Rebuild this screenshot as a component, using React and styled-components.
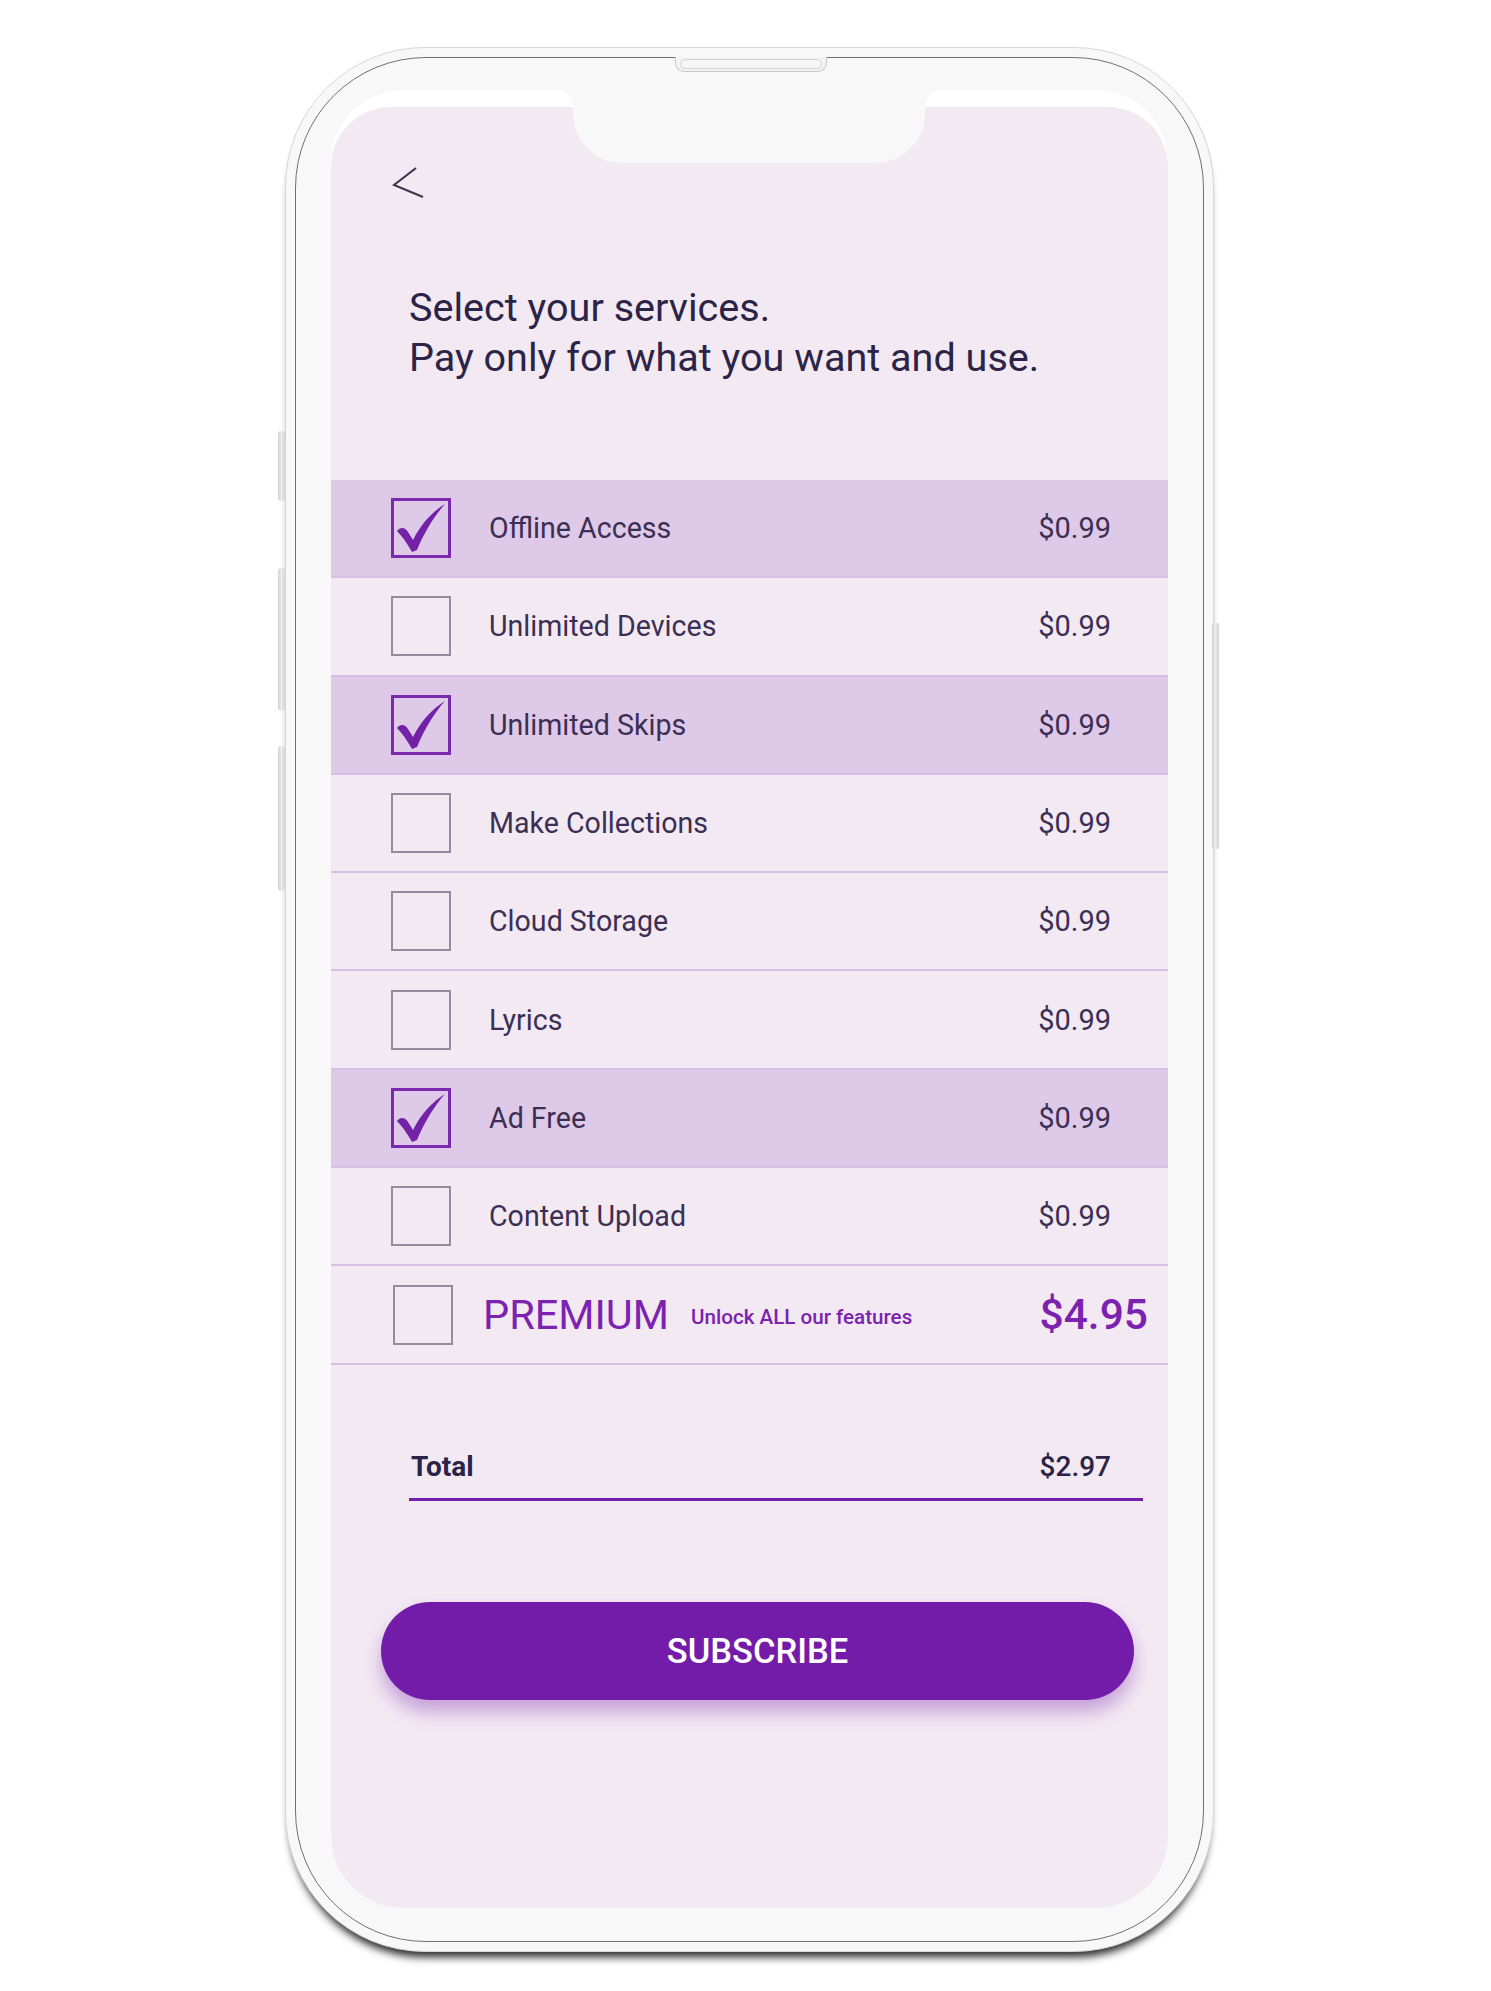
import React from 'react'
import styled, { createGlobalStyle } from 'styled-components'

const GlobalStyle = createGlobalStyle`
  body {
    margin: 0;
    background: #ffffff;
    font-family: Roboto, "Noto Sans", sans-serif;
  }
`

const Page = styled.div`
  display: flex;
  justify-content: center;
  padding: 47px 0 0 8px;
  height: 1991px;
  box-sizing: border-box;
`

const PhoneBody = styled.div`
  position: relative;
  width: 929px;
  height: 1905px;
  box-sizing: border-box;
  padding: 9px;
  border-radius: 140px;
  background: #f8f8f8;
  border: 1px solid #d6d6d6;
  box-shadow: 0 10px 8px -5px rgba(0, 0, 0, 0.85);
`

const SideButton = styled.div`
  position: absolute;
  top: ${p => p.top}px;
  height: ${p => p.h}px;
  width: 7px;
  ${p => (p.right ? 'right: -6px;' : 'left: -8px;')}
  border-radius: 3px;
  background: linear-gradient(90deg, #d2d2d2, #ececec, #d2d2d2);
`

const Speaker = styled.div`
  position: absolute;
  top: 9px;
  left: 389px;
  width: 152px;
  height: 15px;
  box-sizing: border-box;
  border: 1px solid #c9c9c9;
  border-top: none;
  border-radius: 0 0 9px 9px;
  background: #f3f3f3;
  padding: 2px 4px;

  &::after {
    content: '';
    display: block;
    height: 8px;
    border: 1px solid #d4d4d4;
    border-radius: 5px;
    background: #f6f6f6;
  }
`

const Rim = styled.div`
  height: 100%;
  box-sizing: border-box;
  border: 1px solid #707070;
  border-radius: 131px;
  padding: 32px 35px 33px 35px;
`

const Screen = styled.div`
  position: relative;
  height: 100%;
  box-sizing: border-box;
  border-radius: 72px;
  background: #ffffff;
  overflow: hidden;
  display: flex;
  flex-direction: column;
  padding-top: 17px;
`

const Notch = styled.div`
  position: absolute;
  top: 0;
  left: 242px;
  width: 352px;
  height: 73px;
  background: #f8f8f8;
  border-radius: 0 0 50px 50px;

  &::before,
  &::after {
    content: '';
    position: absolute;
    top: 0;
    width: 16px;
    height: 16px;
  }
  &::before {
    left: -16px;
    background: radial-gradient(circle at 0 100%, transparent 15.5px, #f8f8f8 16px);
  }
  &::after {
    right: -16px;
    background: radial-gradient(circle at 100% 100%, transparent 15.5px, #f8f8f8 16px);
  }
`

const Content = styled.div`
  flex: 1;
  background: #f3e9f3;
  border-radius: 60px 60px 0 0;
  display: flex;
  flex-direction: column;
`

const Header = styled.div`
  padding: 59px 0 0 61px;
  height: 34px;
`

const BackButton = styled.button`
  border: none;
  background: none;
  padding: 0;
  width: 34px;
  height: 34px;
  cursor: pointer;
`

const Title = styled.h1`
  margin: 83px 0 0 78px;
  font-size: 39.6px;
  line-height: 50px;
  font-weight: 400;
  color: #2b2446;
`

const List = styled.div`
  margin-top: 97px;
  display: flex;
  flex-direction: column;
`

const Row = styled.div`
  display: flex;
  align-items: center;
  height: 98.3px;
  box-sizing: border-box;
  padding: 0 57px 0 ${p => p.indent || 60}px;
  border-bottom: 2px solid #d7bee6;
  background: ${p => (p.selected ? '#dfc9e8' : 'transparent')};
`

const Box = styled.div`
  width: 60px;
  height: 60px;
  box-sizing: border-box;
  flex-shrink: 0;
  border: ${p => (p.checked ? '3px solid #7b2aae' : '2px solid #968aa2')};
  margin-right: ${p => p.gap || 38}px;

  svg {
    display: block;
    width: 100%;
    height: 100%;
  }
`

const Label = styled.span`
  flex: 1;
  font-size: 28.6px;
  color: #3b2f53;
`

const Price = styled.span`
  font-size: 29px;
  color: #3b2f53;
`

const PremiumName = styled.span`
  font-size: 41.5px;
  color: #7b22b0;
`

const PremiumNote = styled.span`
  flex: 1;
  margin-left: 22px;
  font-size: 20.6px;
  font-weight: 500;
  color: #7b22b0;
  padding-top: 4px;
`

const PremiumPrice = styled.span`
  font-size: 42.5px;
  font-weight: 500;
  color: #7b22b0;
  margin-right: -37px;
`

const TotalRow = styled.div`
  margin: 85px 25px 0 78px;
  display: flex;
  justify-content: space-between;
  align-items: flex-end;
  padding: 0 32px 14px 2px;
  border-bottom: 3px solid #7420ac;
  font-size: 28px;
  line-height: 34px;
  color: #2b2446;
`

const TotalLabel = styled.span`
  font-weight: 700;
`

const TotalPrice = styled.span`
  font-weight: 500;
`

const SubscribeButton = styled.button`
  margin: 101px 34px 0 50px;
  height: 98px;
  border: none;
  border-radius: 49px;
  background: #731ca9;
  color: #ffffff;
  font-family: Roboto, "Noto Sans", sans-serif;
  font-size: 34.5px;
  font-weight: 500;
  box-shadow: 0 12px 18px rgba(115, 28, 169, 0.35);
  cursor: pointer;
`

const services = [
  { name: 'Offline Access', price: '$0.99', checked: true },
  { name: 'Unlimited Devices', price: '$0.99', checked: false },
  { name: 'Unlimited Skips', price: '$0.99', checked: true },
  { name: 'Make Collections', price: '$0.99', checked: false },
  { name: 'Cloud Storage', price: '$0.99', checked: false },
  { name: 'Lyrics', price: '$0.99', checked: false },
  { name: 'Ad Free', price: '$0.99', checked: true },
  { name: 'Content Upload', price: '$0.99', checked: false },
]

function Check() {
  return (
    <svg viewBox="0 0 54 54">
      <path
        d="M3 30 C6 26 11 26 14 31 L19 39 C27 23 38 11 51 3 C41 14 31 30 23 49 L18 51 C13 42 8 35 3 30 Z"
        fill="#7322a8"
      />
    </svg>
  )
}

function Checkbox({ checked, gap }) {
  return <Box checked={checked} gap={gap}>{checked && <Check />}</Box>
}

function App() {
  return (
    <>
      <GlobalStyle />
      <Page>
        <PhoneBody>
          <SideButton top={383} h={70} />
          <SideButton top={520} h={143} />
          <SideButton top={698} h={145} />
          <SideButton right top={575} h={226} />
          <Speaker />
          <Rim>
            <Screen>
              <Notch />
              <Content>
                <Header>
                  <BackButton>
                    <svg width="34" height="34" viewBox="0 0 34 34">
                      <polyline
                        points="24,2 2,19 31,31"
                        fill="none"
                        stroke="#3c3450"
                        strokeWidth="2.2"
                      />
                    </svg>
                  </BackButton>
                </Header>
                <Title>
                  Select your services.
                  <br />
                  Pay only for what you want and use.
                </Title>
                <List>
                  {services.map(s => (
                    <Row key={s.name} selected={s.checked}>
                      <Checkbox checked={s.checked} />
                      <Label>{s.name}</Label>
                      <Price>{s.price}</Price>
                    </Row>
                  ))}
                  <Row indent={62}>
                    <Checkbox gap={30} />
                    <PremiumName>PREMIUM</PremiumName>
                    <PremiumNote>Unlock ALL our features</PremiumNote>
                    <PremiumPrice>$4.95</PremiumPrice>
                  </Row>
                </List>
                <TotalRow>
                  <TotalLabel>Total</TotalLabel>
                  <TotalPrice>$2.97</TotalPrice>
                </TotalRow>
                <SubscribeButton>SUBSCRIBE</SubscribeButton>
              </Content>
            </Screen>
          </Rim>
        </PhoneBody>
      </Page>
    </>
  )
}

export default App
